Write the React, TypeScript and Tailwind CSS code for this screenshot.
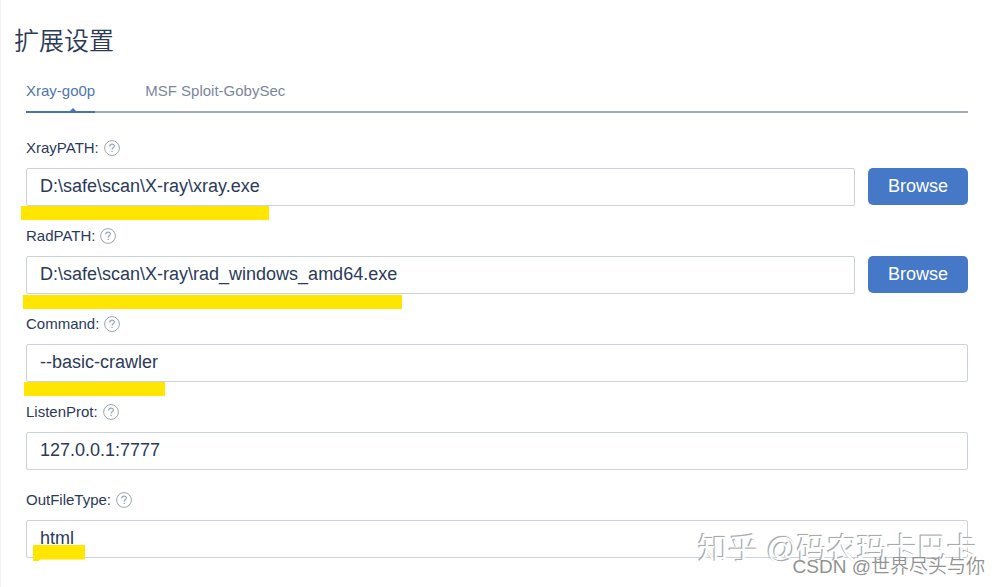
import { useState } from 'react';
import clsx from 'clsx';

interface Field {
    id: string;
    label: string;
    value: string;
    browse?: boolean;
    // Marker stroke drawn over the field
    marker?: string;
}

const TABS = ['Xray-go0p', 'MSF Sploit-GobySec'];

const FIELDS: Field[] = [
    { id: 'xray-path', label: 'XrayPATH:', value: 'D:\\safe\\scan\\X-ray\\xray.exe', browse: true, marker: '-left-[5px] top-[68px] w-[248px] h-[14px]' },
    { id: 'rad-path', label: 'RadPATH:', value: 'D:\\safe\\scan\\X-ray\\rad_windows_amd64.exe', browse: true, marker: '-left-[3px] top-[69px] w-[379px] h-[14px]' },
    { id: 'command', label: 'Command:', value: '--basic-crawler', marker: '-left-[2px] top-[68px] w-[141px] h-[14px]' },
    { id: 'listen-port', label: 'ListenProt:', value: '127.0.0.1:7777' },
    { id: 'out-file-type', label: 'OutFileType:', value: 'html', marker: 'left-[7px] top-[55px] w-[52px] h-4 [clip-path:polygon(0_0,100%_0,100%_90%,15%_90%,10%_100%,0_100%)]' },
];

function HelpIcon() {
    return (
        <svg viewBox="0 0 16 16" className="w-4 h-4 text-[#9aa5b8]" fill="none" stroke="currentColor" aria-hidden="true">
            <circle cx="8" cy="8" r="7.4" strokeWidth="1" />
            <path d="M5.7 6.5c0-1.4 1-2.3 2.3-2.3s2.3.8 2.3 2c0 1.5-2.2 1.7-2.2 3.2" strokeWidth="1.2" />
            <path d="M8.1 10.7v1.4" strokeWidth="1.3" />
        </svg>
    );
}

function FieldRow({ field }: { field: Field }) {
    const [value, setValue] = useState(field.value);

    return (
        <div className="relative">
            <div className="flex items-center gap-[5px] h-5">
                <label htmlFor={field.id} className="text-[15px] leading-5">{field.label}</label>
                <HelpIcon />
            </div>
            <div className="flex items-start gap-[13px] mt-[10px]">
                <input
                    id={field.id}
                    type="text"
                    value={value}
                    onChange={(e) => setValue(e.target.value)}
                    className="flex-1 min-w-0 h-[38px] px-[13px] pb-[2px] text-lg bg-white border border-[#cbd2dc] rounded-xs outline-none"
                />
                {field.browse && (
                    <button type="button" className="w-[100px] h-[37px] pb-[2px] text-lg text-white bg-[#4678c8] rounded-[5px]">
                        Browse
                    </button>
                )}
            </div>
            {field.marker && <span className={clsx('absolute bg-[#ffe600]', field.marker)} />}
        </div>
    );
}

export default function App() {
    const [activeTab, setActiveTab] = useState(TABS[0]);

    return (
        <div className="relative bg-white border-l border-[#f3f3f5] text-[#2b3a58] font-['Liberation_Sans','Noto_Sans_CJK_SC',sans-serif] pl-[25px] pr-8 pt-6 pb-[29px]">
            <h1 className="-ml-3 text-[25px] leading-[34px] font-[350]">扩展设置</h1>

            {/* Tabs */}
            <div role="tablist" className="flex gap-[50px] mt-[18px] h-[37px] border-b-2 border-[#a2abb9]">
                {TABS.map((tab) => (
                    <button
                        key={tab}
                        type="button"
                        role="tab"
                        aria-selected={tab === activeTab}
                        onClick={() => setActiveTab(tab)}
                        className={clsx(
                            'relative -mb-[2px] pb-[6px] text-[15px] leading-5 border-b-2',
                            tab === activeTab ? 'text-[#4d76b0] border-[#4674b0]' : 'text-[#7c879d] border-transparent'
                        )}
                    >
                        {tab}
                        {tab === activeTab && (
                            <svg viewBox="0 0 8 4" className="absolute bottom-0 right-[19px] w-[6px] h-[3px]" fill="#4674b0" aria-hidden="true">
                                <path d="M4 0l4 4H0z" />
                            </svg>
                        )}
                    </button>
                ))}
            </div>

            <form className="flex flex-col gap-5 mt-[25px]">
                {FIELDS.map((field) => (
                    <FieldRow key={field.id} field={field} />
                ))}
            </form>

            {/* Watermarks */}
            <span className="absolute right-[23px] bottom-[18px] text-[30px] leading-10 text-white whitespace-nowrap pointer-events-none [text-shadow:-1px_-1px_0_#aaa,-1px_-1px_1px_#aaa]">
                知乎 @码农玛卡巴卡
            </span>
            <span className="absolute right-[15px] bottom-[6px] text-[19px] leading-7 font-[350] text-[#929292] whitespace-nowrap pointer-events-none [text-shadow:1px_1px_0_#fff]">
                CSDN @世界尽头与你
            </span>
        </div>
    );
}
